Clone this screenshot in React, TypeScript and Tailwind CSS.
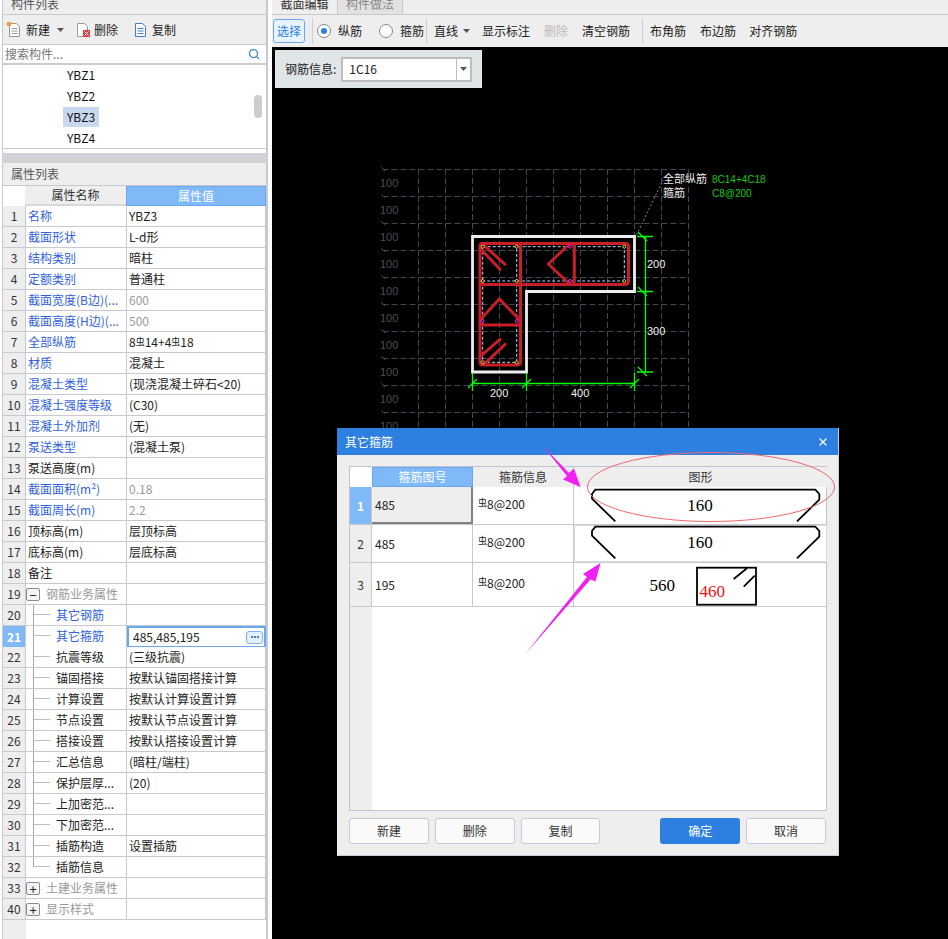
import React from 'react';
import { Search, X } from 'lucide-react';

type Row = { no: number; name: string; value?: string; kind?: 'blue' | 'group' | 'child' | 'childBlue' | 'plain'; muted?: boolean; open?: boolean; last?: boolean };

const rows: Row[] = [
  { no: 1, name: '名称', value: 'YBZ3', kind: 'blue' },
  { no: 2, name: '截面形状', value: 'L-d形', kind: 'blue' },
  { no: 3, name: '结构类别', value: '暗柱', kind: 'blue' },
  { no: 4, name: '定额类别', value: '普通柱', kind: 'blue' },
  { no: 5, name: '截面宽度(B边)(...', value: '600', kind: 'blue', muted: true },
  { no: 6, name: '截面高度(H边)(...', value: '500', kind: 'blue', muted: true },
  { no: 7, name: '全部纵筋', value: '8虫14+4虫18', kind: 'blue' },
  { no: 8, name: '材质', value: '混凝土', kind: 'blue' },
  { no: 9, name: '混凝土类型', value: '(现浇混凝土碎石<20)', kind: 'blue' },
  { no: 10, name: '混凝土强度等级', value: '(C30)', kind: 'blue' },
  { no: 11, name: '混凝土外加剂', value: '(无)', kind: 'blue' },
  { no: 12, name: '泵送类型', value: '(混凝土泵)', kind: 'blue' },
  { no: 13, name: '泵送高度(m)', kind: 'plain' },
  { no: 14, name: '截面面积(m²)', value: '0.18', kind: 'blue', muted: true },
  { no: 15, name: '截面周长(m)', value: '2.2', kind: 'blue', muted: true },
  { no: 16, name: '顶标高(m)', value: '层顶标高', kind: 'plain' },
  { no: 17, name: '底标高(m)', value: '层底标高', kind: 'plain' },
  { no: 18, name: '备注', kind: 'plain' },
  { no: 19, name: '钢筋业务属性', kind: 'group', open: true },
  { no: 20, name: '其它钢筋', kind: 'childBlue' },
  { no: 21, name: '其它箍筋', value: '485,485,195', kind: 'childBlue' },
  { no: 22, name: '抗震等级', value: '(三级抗震)', kind: 'child' },
  { no: 23, name: '锚固搭接', value: '按默认锚固搭接计算', kind: 'child' },
  { no: 24, name: '计算设置', value: '按默认计算设置计算', kind: 'child' },
  { no: 25, name: '节点设置', value: '按默认节点设置计算', kind: 'child' },
  { no: 26, name: '搭接设置', value: '按默认搭接设置计算', kind: 'child' },
  { no: 27, name: '汇总信息', value: '(暗柱/端柱)', kind: 'child' },
  { no: 28, name: '保护层厚...', value: '(20)', kind: 'child' },
  { no: 29, name: '上加密范...', kind: 'child' },
  { no: 30, name: '下加密范...', kind: 'child' },
  { no: 31, name: '插筋构造', value: '设置插筋', kind: 'child' },
  { no: 32, name: '插筋信息', kind: 'child', last: true },
  { no: 33, name: '土建业务属性', kind: 'group' },
  { no: 40, name: '显示样式', kind: 'group' },
];

function Caret({ className = '' }: { className?: string }) {
  return (
    <svg width="7" height="4" viewBox="0 0 7 4" className={className}>
      <path d="M0 0h7L3.500 4z" fill="#555" />
    </svg>
  );
}

function DocIcon({ type }: { type: 'new' | 'del' | 'copy' }) {
  const line = type === 'copy' ? '#3f7fc0' : '#9a9a9a';
  return (
    <svg width="16" height="16" viewBox="0 0 16 16" fill="none">
      <path d="M2.500 1.500h7l3 3v10h-10z" fill="#fff" stroke={line} />
      {type !== 'del' && <path d="M4.500 6.500h6M4.500 9h6M4.500 11.500h6" stroke={line} />}
      {type === 'new' && <path d="M0 0h4v4H0z" fill="#f0a030" />}
      {type === 'del' && <path d="M8 8h7v7H8z" fill="#d84040" />}
      {type === 'del' && <path d="M9.500 9.500l4 4m0-4l-4 4" stroke="#fff" />}
    </svg>
  );
}

function ToolBtn({ type, label }: { type: 'new' | 'del' | 'copy'; label: string }) {
  return (
    <div className="flex items-center gap-[3px]">
      <DocIcon type={type} />
      <span>{label}</span>
    </div>
  );
}

function Expander({ open }: { open?: boolean }) {
  return (
    <span className="mr-[6px] flex h-[13px] w-[14px] shrink-0 items-center justify-center rounded-[2px] border border-[#8a8a8a] bg-[#f4f4f4] text-[13px] leading-none text-[#222]">
      {open ? '−' : '+'}
    </span>
  );
}

// the rebar grade mark sits small and raised before the diameter
function RebarText({ text }: { text: string }) {
  const parts = text.split('虫');
  return (
    <>
      {parts.map((p, i) => (
        <React.Fragment key={i}>
          {i > 0 && <span className="mb-[3px] inline-block align-[2px] text-[9px]">虫</span>}
          {p}
        </React.Fragment>
      ))}
    </>
  );
}

function NameCell({ row }: { row: Row }) {
  if (row.kind === 'group') {
    return (
      <div className="flex h-full items-center text-[#999]">
        <Expander open={row.open} />
        <span>{row.name}</span>
      </div>
    );
  }
  if (row.kind === 'child' || row.kind === 'childBlue') {
    return (
      <div className="flex h-full items-start pl-[7px]">
        <span className={`w-[17px] shrink-0 border-l border-[#a8a8a8] ${row.last ? 'h-[10px]' : 'h-[21px]'}`}>
          <span className="block h-[10px] border-b border-[#c0c0c0]" />
        </span>
        <span className={`ml-[6px] leading-[20px] whitespace-nowrap ${row.kind === 'childBlue' ? 'text-[#2f5fe0]' : 'text-[#222]'}`}>
          {row.name}
        </span>
      </div>
    );
  }
  return (
    <div className={`flex h-full items-center pl-[2px] whitespace-nowrap ${row.kind === 'blue' ? 'text-[#2f5fe0]' : 'text-[#222]'}`}>
      {row.name}
    </div>
  );
}

function PropRow({ row }: { row: Row }) {
  const active = row.no === 21;
  return (
    <div className="grid h-[21px] grid-cols-[23px_101px_139px] border-b border-[#c8c8d0]">
      <div className={`flex items-center justify-center border-r border-[#c8c8d0] ${active ? 'bg-[#7fb9f8] font-bold text-white' : 'bg-[#eeeeee] text-[#333]'}`}>
        {row.no}
      </div>
      <div className="overflow-hidden border-r border-[#c8c8d0] bg-white">
        <NameCell row={row} />
      </div>
      {active ? (
        <div className="flex items-center justify-between border-2 border-[#6aa8ec] bg-white pl-[4px] pr-[1px] text-[#222]">
          <span>{row.value}</span>
          <span className="flex h-[13px] w-[17px] items-center justify-center gap-[1px] rounded-[3px] border border-[#7fb0e8] bg-[#e4f0fc]">
            <i className="h-[2px] w-[2px] bg-[#4a80c0]" />
            <i className="h-[2px] w-[2px] bg-[#4a80c0]" />
            <i className="h-[2px] w-[2px] bg-[#4a80c0]" />
          </span>
        </div>
      ) : (
        <div className={`flex items-center border-r border-[#c8c8d0] bg-white pl-[2px] whitespace-nowrap ${row.muted ? 'text-[#999]' : 'text-[#222]'}`}>
          <span><RebarText text={row.value ?? ''} /></span>
        </div>
      )}
    </div>
  );
}

function LeftPanel() {
  return (
    <div className="ml-[2px] flex w-[266px] shrink-0 flex-col border-r-2 border-l border-x-[#c8c8d0] bg-white text-[12px]">
      <div className="flex h-[15px] shrink-0 items-end overflow-hidden border-b border-[#c8c8d0] bg-[#eeeeee] pl-[8px] text-[#555]">
        <span className="leading-[20px]">构件列表</span>
      </div>
      <div className="flex h-[30px] shrink-0 items-center border-b border-[#c8c8d0] bg-[#eeeeee] pl-[4px] text-[#222]">
        <ToolBtn type="new" label="新建" />
        <Caret className="ml-[7px]" />
        <div className="ml-[11px]"><ToolBtn type="del" label="删除" /></div>
        <div className="ml-[15px]"><ToolBtn type="copy" label="复制" /></div>
      </div>
      <div className="flex h-[20px] shrink-0 items-center justify-between border-b-2 border-[#cccccc] pl-[2px] pr-[6px] text-[#777]">
        <span>搜索构件...</span>
        <Search size={12} strokeWidth={2.5} className="text-[#3a8cc0]" />
      </div>
      <div className="relative flex h-[84px] shrink-0 flex-col border-b border-[#c8c8d0] pl-[60px] text-[#111]">
        {['YBZ1', 'YBZ2', 'YBZ3', 'YBZ4'].map((t) => (
          <div key={t} className={`flex h-[21px] w-[36px] items-center justify-center ${t === 'YBZ3' ? 'bg-[#c8d8ef]' : ''}`}>{t}</div>
        ))}
        <div className="absolute top-[30px] left-[251px] h-[23px] w-[8px] rounded-full bg-[#cccccc]" />
      </div>
      <div className="h-[4px] shrink-0 bg-white" />
      <div className="-mx-px h-[10px] shrink-0 bg-[#d2d3d8]" />
      <div className="flex h-[23px] shrink-0 items-center border-b border-[#c8c8d0] bg-[#eeeeee] pl-[8px] text-[#555]">属性列表</div>
      <div className="grid h-[20px] shrink-0 grid-cols-[22px_101px_140px] text-[#333]">
        <div className="bg-white" />
        <div className="flex items-center justify-center border-b-2 border-[#d8d8d8] bg-[#eeeeee]">属性名称</div>
        <div className="flex items-center justify-center border border-[#6aa8ec] bg-[#7fb9f8] text-white">属性值</div>
      </div>
      <div className="flex flex-col">
        {rows.map((r) => <PropRow key={r.no} row={r} />)}
      </div>
      <div className="flex-1 bg-white">
        <div className="h-full w-[23px] bg-[#eeeeee]" />
      </div>
    </div>
  );
}

function Radio({ checked, label }: { checked?: boolean; label: string }) {
  return (
    <div className="flex items-center gap-[7px]">
      <span className="flex h-[14px] w-[14px] items-center justify-center rounded-full border border-[#888] bg-white">
        {checked && <span className="h-[6px] w-[6px] rounded-full bg-[#2d7fe0]" />}
      </span>
      <span>{label}</span>
    </div>
  );
}

function Sep({ className }: { className: string }) {
  return <span className={`h-[26px] w-px bg-[#cfcfcf] ${className}`} />;
}

function TopBar() {
  return (
    <div className="shrink-0 bg-[#eeeeee] text-[12px] text-[#222]">
      <div className="flex h-[15px] items-end overflow-hidden border-b border-[#c8c8d0]">
        <div className="flex h-[14px] w-[66px] items-end justify-center border-r border-[#c8c8d0] leading-[20px] text-[#333]">截面编辑</div>
        <div className="flex h-[14px] w-[65px] items-end justify-center border-r border-[#c8c8d0] bg-[#e2e2e2] leading-[20px] text-[#888]">构件做法</div>
      </div>
      <div className="flex h-[32px] items-center pl-[1px]">
        <span className="flex h-[24px] w-[32px] items-center justify-center rounded-[3px] border border-[#6aa8ec] bg-[#e8f3ff] text-[#2d7fe0]">选择</span>
        <Sep className="ml-[7px]" />
        <div className="ml-[4px]"><Radio checked label="纵筋" /></div>
        <div className="ml-[17px]"><Radio label="箍筋" /></div>
        <Sep className="ml-[2px]" />
        <span className="ml-[7px]">直线</span>
        <Caret className="ml-[5px]" />
        <span className="ml-[12px]">显示标注</span>
        <span className="ml-[14px] text-[#bbb]">删除</span>
        <span className="ml-[14px]">清空钢筋</span>
        <Sep className="ml-[12px]" />
        <span className="ml-[7px]">布角筋</span>
        <span className="ml-[14px]">布边筋</span>
        <span className="ml-[13px]">对齐钢筋</span>
      </div>
    </div>
  );
}

const gridX = [418, 445, 472, 499, 526, 553, 580, 607, 634, 661, 688];
const gridY = [169, 196, 223, 250, 277, 304, 331, 358, 385, 412];

function Dot({ x, y, c }: { x: number; y: number; c: string }) {
  return <circle cx={x} cy={y} r="1.500" fill="#000" stroke={c} strokeWidth="1" />;
}

function SectionDrawing() {
  const yellow: [number, number][] = [[482.7, 246.7], [516.7, 246.7], [624.3, 246.7], [482.7, 281], [516.7, 281], [624.3, 281], [482.7, 362.3], [516.7, 362.3]];
  const pink: [number, number][] = [[570, 246.7], [570, 281], [482.7, 321], [516.7, 321]];
  return (
    <svg className="absolute inset-0 h-full w-full" viewBox="272 47 676 892" fontFamily="'Liberation Sans', 'Noto Sans CJK SC', sans-serif" fontSize="11">
      {gridY.map((y) => (
        <g key={y}>
          <path d={`M382.500 ${y + 0.5}H688`} stroke="#3f4654" strokeDasharray="6 3" />
          <path d={`M381 ${y - 2}l4 4`} stroke="#3f4654" />
          <text x="380" y={y + 18} fill="#4b4f55">100</text>
        </g>
      ))}
      {gridX.map((x) => <path key={x} d={`M${x + 0.5} 169V430`} stroke="#3f4654" strokeDasharray="6 3" />)}

      <path d="M636.500 235L663 180" stroke="#888" strokeDasharray="2 2" />
      <text x="663" y="183" fill="#e8e8e8" fontFamily="'Noto Sans CJK SC', sans-serif">全部纵筋</text>
      <text x="663" y="197" fill="#e8e8e8" fontFamily="'Noto Sans CJK SC', sans-serif">箍筋</text>
      <text x="712" y="183" fill="#10c810" fontSize="10">8C14+4C18</text>
      <text x="712" y="197" fill="#10c810" fontSize="10">C8@200</text>

      <path d="M472.500 236.500H634.500V291.500H526.500V372H472.500Z" fill="none" stroke="#eeeeee" strokeWidth="2.800" />
      <path d="M482.700 246.700H624.300V281H482.700M482.700 246.700V362.300H516.700V246.700" fill="none" stroke="#b8dcf8" strokeDasharray="3 2" />
      <g fill="none" stroke="#c81e28" strokeWidth="3" strokeLinejoin="round" strokeLinecap="round">
        <path d="M482 243.500H625q3.500 0 3.500 3.500V281q0 3.500-3.500 3.500H480" />
        <path d="M480 246q0-2.500 2.500-2.500M480 246V362q0 3 3 3H517q3.500 0 3.500-3.500V243.500" />
        <path d="M480 325H520.500" />
        <path d="M480 320L499.300 299L520 320" />
        <path d="M574.300 243.500V281q0 3.500-3.500 3.500" />
        <path d="M570 243.500L548.300 264L570 284.500" />
        <path d="M481.700 243.300L505 264.300M480 248.300L500 269.300" />
        <path d="M480 356.700L500 339.300M485 363.300L505 344.300" />
      </g>
      {yellow.map(([x, y]) => <Dot key={`${x}-${y}`} x={x} y={y} c="#f0d040" />)}
      {pink.map(([x, y]) => <Dot key={`${x}-${y}`} x={x} y={y} c="#f020f0" />)}

      <g stroke="#00ff00" fill="none" strokeWidth="1.300">
        <path d="M472.500 383.500H634.500M472.500 373V391M526.500 373V391M634.500 373V391" />
        <path d="M468 388l9-9M522 388l9-9M630 388l9-9" />
        <path d="M645.500 236.500V372M637 236.500H653M637 291.500H653M637 372H653" />
        <path d="M638 232l9 9M638 287l9 9M638 367l9 9" />
      </g>
      <g fill="#f0f0f0">
        <text x="490" y="397">200</text>
        <text x="571" y="397">400</text>
        <text x="647" y="268">200</text>
        <text x="647" y="335">300</text>
      </g>
    </svg>
  );
}

function Stirrup({ className = '' }: { className?: string }) {
  return (
    <svg className={className} width="252" height="37" viewBox="0 0 252 37" fontFamily="'Liberation Serif', serif" fontSize="17">
      <path d="M41.300 34.300L18 11.700V7L21.300 2.700H241.300L245.300 7V12.700L223 34.300" fill="none" stroke="#000" strokeWidth="1.800" />
      <text x="126" y="24" textAnchor="middle" fill="#000">160</text>
    </svg>
  );
}

function DialogRow({ no, code, h, active, cell }: { no: number; code: string; h: string; active?: boolean; cell: React.ReactNode }) {
  return (
    <div className={`grid grid-cols-[22px_101px_101px_253px] border-b border-[#c8c8d0] ${h}`}>
      <div className={`flex items-center justify-center border-r border-[#c8c8d0] ${active ? 'bg-[#7fb9f8] font-bold text-white' : 'bg-[#eeeeee] text-[#333]'}`}>{no}</div>
      <div className={`flex items-center pl-[3px] ${active ? 'border-r-2 border-b-2 border-[#808080] bg-[#eeeeee]' : 'border-r border-[#c8c8d0]'}`}>{code}</div>
      <div className="flex items-center border-r border-[#c8c8d0] pb-[3px] pl-[5px]">
        <span className="mb-[3px] text-[9px]">虫</span>8@200
      </div>
      <div className="overflow-hidden">{cell}</div>
    </div>
  );
}

function Dialog() {
  const btn = 'flex h-[26px] w-[80px] items-center justify-center rounded-[3px] border border-[#c4cad8] bg-[#fafafa] text-[#333]';
  return (
    <div className="absolute top-[428px] left-[337px] flex h-[428px] w-[502px] flex-col border-b border-r border-[#c8ccd8] bg-[#eeeeee] text-[12px] text-[#222]">
      <div className="flex h-[27px] shrink-0 items-center justify-between bg-[#2d7fe0] pr-[9px] pl-[8px] text-white">
        <span>其它箍筋</span>
        <X size={12} strokeWidth={2.5} />
      </div>
      <div className="mt-[11px] mr-[11px] ml-[12px] flex h-[345px] flex-col border border-[#c0c4d0] bg-white">
        <div className="grid h-[20px] shrink-0 grid-cols-[22px_101px_101px_253px] border-b border-[#c8c8d0]">
          <div className="bg-white" />
          <div className="flex items-center justify-center border border-[#6aa8ec] bg-[#7fb9f8] text-white">箍筋图号</div>
          <div className="flex items-center justify-center border-r border-[#c8c8d0] bg-[#eeeeee] text-[#333]">箍筋信息</div>
          <div className="flex items-center justify-center bg-[#eeeeee] text-[#333]">图形</div>
        </div>
        <DialogRow no={1} code="485" h="h-[38px]" active cell={<Stirrup />} />
        <DialogRow no={2} code="485" h="h-[38px]" cell={<div className="h-full border border-[#dddddd]"><Stirrup className="-mt-[2px] -ml-px" /></div>} />
        <DialogRow no={3} code="195" h="h-[44px]" cell={
          <svg width="252" height="43" viewBox="574 562 252 43" fontFamily="'Liberation Serif', serif" fontSize="17">
            <text x="649.500" y="590" fill="#000">560</text>
            <rect x="697" y="566.700" width="59" height="37" fill="none" stroke="#000" strokeWidth="1.800" />
            <path d="M733.700 578L747 567.300M743.700 585.700L754.700 574.700" stroke="#000" strokeWidth="1.800" />
            <text x="699.500" y="595.500" fill="#f01010">460</text>
          </svg>
        } />
        <div className="flex-1"><div className="h-full w-[22px] bg-[#eeeeee]" /></div>
      </div>
      <div className="mx-[12px] mt-[7px] flex items-center">
        <span className={btn}>新建</span>
        <span className={`ml-[6px] ${btn}`}>删除</span>
        <span className={`ml-[6px] ${btn}`}>复制</span>
        <span className="ml-[60px] flex h-[26px] w-[80px] items-center justify-center rounded-[3px] bg-[#2d7fe0] text-white">确定</span>
        <span className={`ml-[6px] ${btn}`}>取消</span>
      </div>
    </div>
  );
}

function Annotations() {
  return (
    <svg className="pointer-events-none absolute inset-0 h-full w-full" viewBox="0 0 948 939" fill="none">
      <ellipse cx="711" cy="487" rx="123.500" ry="34.500" stroke="#f06868" />
      <path d="M542 445L569 473L574 468.500L580.500 487L563 479.500L567 476Z" fill="#f020f0" />
      <path d="M525.300 654L587 577L583 574L600.500 563L595.500 581.500L590.500 579.500Z" fill="#f020f0" />
    </svg>
  );
}

export default function App() {
  return (
    <div className="relative flex h-[939px] w-[948px] overflow-hidden bg-white font-['Noto_Sans_CJK_SC',sans-serif]">
      <LeftPanel />
      <div className="w-[4px] shrink-0 bg-white" />
      <div className="flex min-w-0 flex-1 flex-col">
        <TopBar />
        <div className="relative flex-1 bg-black">
          <SectionDrawing />
          <div className="absolute top-[3px] left-[3px] flex h-[38px] w-[207px] items-center bg-[#e0e6e8] pl-[10px] text-[12px] text-[#222]">
            <span>钢筋信息:</span>
            <div className="ml-[5px] flex h-[25px] w-[131px] border-2 border-[#bdbdbd] bg-white">
              <span className="flex flex-1 items-center border-r border-[#bdbdbd] pl-[6px]">1C16</span>
              <span className="flex w-[13px] items-center justify-center"><Caret /></span>
            </div>
          </div>
        </div>
      </div>
      <Dialog />
      <Annotations />
    </div>
  );
}
